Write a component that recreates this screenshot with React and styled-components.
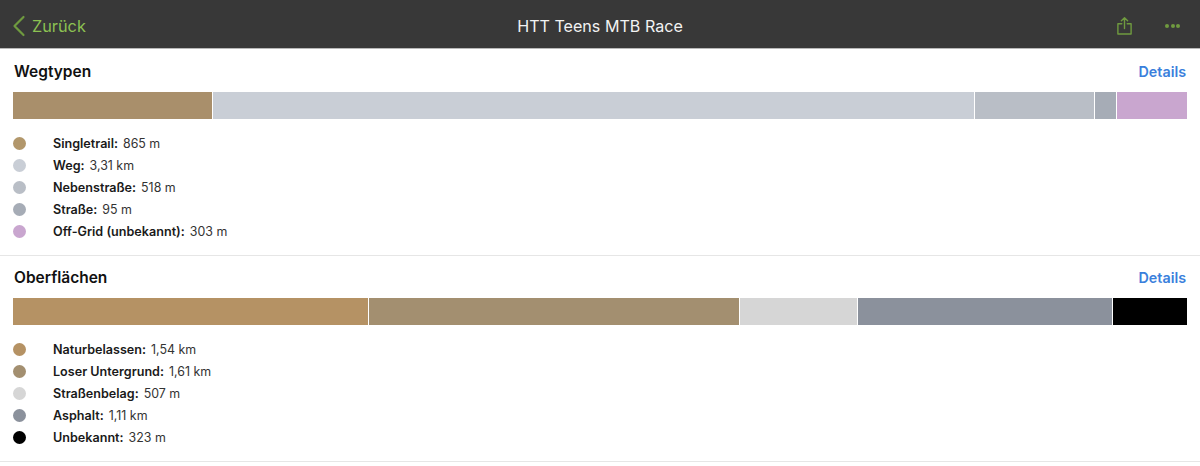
import React from 'react';
import styled, { createGlobalStyle } from 'styled-components';

const sections = [
  {
    title: 'Wegtypen',
    segments: [
      { width: 199, color: '#a98f6b' },
      { width: 761, color: '#c9ced6' },
      { width: 119, color: '#b9bec6' },
      { width: 21, color: '#a6acb6' },
      { width: 70, color: '#c9a6cf' },
    ],
    items: [
      { name: 'Singletrail:', value: '865 m', color: '#b2976b' },
      { name: 'Weg:', value: '3,31 km', color: '#c9ced6' },
      { name: 'Nebenstraße:', value: '518 m', color: '#b9bec6' },
      { name: 'Straße:', value: '95 m', color: '#a6acb6' },
      { name: 'Off-Grid (unbekannt):', value: '303 m', color: '#c9a6cf' },
    ],
  },
  {
    title: 'Oberflächen',
    segments: [
      { width: 355, color: '#b59264' },
      { width: 370, color: '#a38f70' },
      { width: 117, color: '#d6d6d6' },
      { width: 254, color: '#8b919c' },
      { width: 74, color: '#000000' },
    ],
    items: [
      { name: 'Naturbelassen:', value: '1,54 km', color: '#b59264' },
      { name: 'Loser Untergrund:', value: '1,61 km', color: '#a38f70' },
      { name: 'Straßenbelag:', value: '507 m', color: '#d6d6d6' },
      { name: 'Asphalt:', value: '1,11 km', color: '#8b919c' },
      { name: 'Unbekannt:', value: '323 m', color: '#000000' },
    ],
  },
];

function App() {
  return (
    <>
      <GlobalStyle />
      <Page>
        <NavBar>
          <BackLink>
            <svg width="14" height="22" viewBox="0 0 14 22" fill="none">
              <path d="M11.5 2 L2.5 11 L11.5 20" stroke="#6f9a3f" strokeWidth="2.2" strokeLinecap="round" strokeLinejoin="round" />
            </svg>
            <BackLabel>Zurück</BackLabel>
          </BackLink>
          <NavTitle>HTT Teens MTB Race</NavTitle>
          <NavActions>
            <svg width="15" height="18" viewBox="0 0 15 18" fill="none">
              <path
                d="M4.8 6.8 H0.9 V17 H14.1 V6.8 H10.2 M7.5 11.6 V1 M4.4 3.8 L7.5 0.8 L10.6 3.8"
                stroke="#6f9a3f"
                strokeWidth="1.4"
                strokeLinecap="round"
                strokeLinejoin="round"
              />
            </svg>
            <Dots>
              <Dot />
              <Dot />
              <Dot />
            </Dots>
          </NavActions>
        </NavBar>
        {sections.map((section) => (
          <Section key={section.title}>
            <SectionHead>
              <SectionTitle>{section.title}</SectionTitle>
              <DetailsLink>Details</DetailsLink>
            </SectionHead>
            <Bar>
              {section.segments.map((segment) => (
                <Segment key={segment.color} $grow={segment.width} $color={segment.color} />
              ))}
            </Bar>
            <Legend>
              {section.items.map((item) => (
                <LegendRow key={item.name}>
                  <Swatch $color={item.color} />
                  <LegendName>{item.name}</LegendName>
                  <LegendValue>{item.value}</LegendValue>
                </LegendRow>
              ))}
            </Legend>
          </Section>
        ))}
      </Page>
    </>
  );
}

const GlobalStyle = createGlobalStyle`
  html, body {
    margin: 0;
    padding: 0;
    background: #fff;
  }
  body {
    font-family: Inter, "Liberation Sans", sans-serif;
    color: #000;
  }
`;

const Page = styled.div`
  width: 1200px;
  height: 466px;
  overflow: hidden;
`;

const NavBar = styled.div`
  display: grid;
  grid-template-columns: 1fr auto 1fr;
  align-items: center;
  box-sizing: border-box;
  height: 49px;
  margin-bottom: 1px;
  padding: 3px 20px 0;
  background: #383838;
  border-bottom: 1px solid #b8b8b8;
`;

const BackLink = styled.div`
  display: flex;
  align-items: center;
  gap: 6px;
  margin-left: -8px;
`;

const BackLabel = styled.span`
  font-size: 16.3px;
  color: #8cc152;
`;

const NavTitle = styled.div`
  font-size: 16.1px;
  color: #f2f2f2;
`;

const NavActions = styled.div`
  display: flex;
  align-items: center;
  justify-content: flex-end;
  gap: 33px;
`;

const Dots = styled.div`
  display: flex;
  gap: 1.5px;
`;

const Dot = styled.span`
  width: 4px;
  height: 4px;
  border-radius: 50%;
  background: #6f9a3f;
`;

const Section = styled.section`
  box-sizing: border-box;
  height: 206px;
  padding: 0 13px;
  border-bottom: 1px solid #e6e6e6;
`;

const SectionHead = styled.div`
  display: flex;
  align-items: center;
  justify-content: space-between;
  height: 42px;
  padding: 0 1px;
`;

const SectionTitle = styled.div`
  font-size: 15.5px;
  font-weight: 600;
  color: #111;
`;

const DetailsLink = styled.div`
  font-size: 14.3px;
  font-weight: 600;
  color: #3a7fdc;
`;

const Bar = styled.div`
  display: flex;
  gap: 1px;
  height: 27px;
`;

const Segment = styled.div`
  flex: ${(props) => props.$grow} 1 0;
  background: ${(props) => props.$color};
`;

const Legend = styled.div`
  display: flex;
  flex-direction: column;
  padding-top: 13px;
`;

const LegendRow = styled.div`
  display: flex;
  align-items: center;
  height: 22px;
  font-size: 12.4px;
`;

const Swatch = styled.span`
  width: 13px;
  height: 13px;
  border-radius: 50%;
  background: ${(props) => props.$color};
  margin-right: 27px;
`;

const LegendName = styled.span`
  font-size: 12.6px;
  font-weight: 600;
  color: #1a1a1a;
  margin-right: 5px;
`;

const LegendValue = styled.span`
  color: #333;
`;

export default App;
